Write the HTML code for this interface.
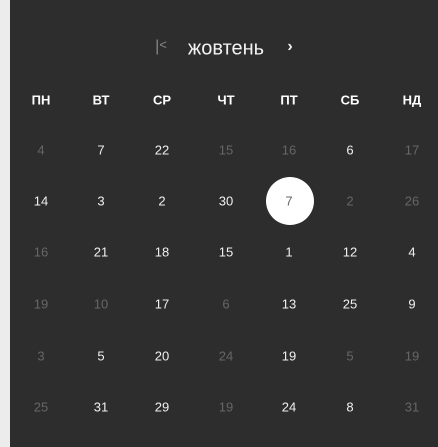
<!DOCTYPE html>
<html><head><meta charset="utf-8"><style>
html,body{margin:0;padding:0;width:438px;height:447px;overflow:hidden;background:#ececec;font-family:"Liberation Sans",sans-serif}
.p{position:absolute;left:10px;top:0;width:428px;height:447px;background:#2d2d2d}
.t{position:absolute;transform:translate(-50%,-50%);font-size:13px;color:#f0f0f0;white-space:nowrap}
.g{color:#666}
.b{font-weight:bold;color:#fff}
.c{position:absolute;left:266px;top:177px;width:48px;height:48px;border-radius:50%;background:#fff}
</style></head><body>
<div class="p"></div>
<div class="t" style="left:161px;top:47px;color:#888;font-size:16px">|<span style="font-size:13px;position:relative;top:-2px">&lt;</span></div>
<div class="t" style="left:226px;top:49px;font-size:20px;color:#f2f2f2">жовтень</div>
<div class="t" style="left:290px;top:47px;font-size:16px;font-weight:bold">›</div>
<div class="c"></div>

<div class="t b" style="left:41px;top:100px">ПН</div>
<div class="t b" style="left:101px;top:100px">ВТ</div>
<div class="t b" style="left:162px;top:100px">СР</div>
<div class="t b" style="left:226px;top:100px">ЧТ</div>
<div class="t b" style="left:289px;top:100px">ПТ</div>
<div class="t b" style="left:350px;top:100px">СБ</div>
<div class="t b" style="left:412px;top:100px">НД</div>

<div class="t g" style="left:41px;top:150px">4</div>
<div class="t" style="left:101px;top:150px">7</div>
<div class="t" style="left:162px;top:150px">22</div>
<div class="t g" style="left:226px;top:150px">15</div>
<div class="t g" style="left:289px;top:150px">16</div>
<div class="t" style="left:350px;top:150px">6</div>
<div class="t g" style="left:412px;top:150px">17</div>

<div class="t" style="left:41px;top:201px">14</div>
<div class="t" style="left:101px;top:201px">3</div>
<div class="t" style="left:162px;top:201px">2</div>
<div class="t" style="left:226px;top:201px">30</div>
<div class="t" style="left:289px;top:201px;color:#666">7</div>
<div class="t g" style="left:350px;top:201px">2</div>
<div class="t g" style="left:412px;top:201px">26</div>

<div class="t g" style="left:41px;top:252px">16</div>
<div class="t" style="left:101px;top:252px">21</div>
<div class="t" style="left:162px;top:252px">18</div>
<div class="t" style="left:226px;top:252px">15</div>
<div class="t" style="left:289px;top:252px">1</div>
<div class="t" style="left:350px;top:252px">12</div>
<div class="t" style="left:412px;top:252px">4</div>

<div class="t g" style="left:41px;top:304px">19</div>
<div class="t g" style="left:101px;top:304px">10</div>
<div class="t" style="left:162px;top:304px">17</div>
<div class="t g" style="left:226px;top:304px">6</div>
<div class="t" style="left:289px;top:304px">13</div>
<div class="t" style="left:350px;top:304px">25</div>
<div class="t" style="left:412px;top:304px">9</div>

<div class="t g" style="left:41px;top:356px">3</div>
<div class="t" style="left:101px;top:356px">5</div>
<div class="t" style="left:162px;top:356px">20</div>
<div class="t g" style="left:226px;top:356px">24</div>
<div class="t" style="left:289px;top:356px">19</div>
<div class="t g" style="left:350px;top:356px">5</div>
<div class="t g" style="left:412px;top:356px">19</div>

<div class="t g" style="left:41px;top:407px">25</div>
<div class="t" style="left:101px;top:407px">31</div>
<div class="t" style="left:162px;top:407px">29</div>
<div class="t g" style="left:226px;top:407px">19</div>
<div class="t" style="left:289px;top:407px">24</div>
<div class="t" style="left:350px;top:407px">8</div>
<div class="t g" style="left:412px;top:407px">31</div>
</body></html>
